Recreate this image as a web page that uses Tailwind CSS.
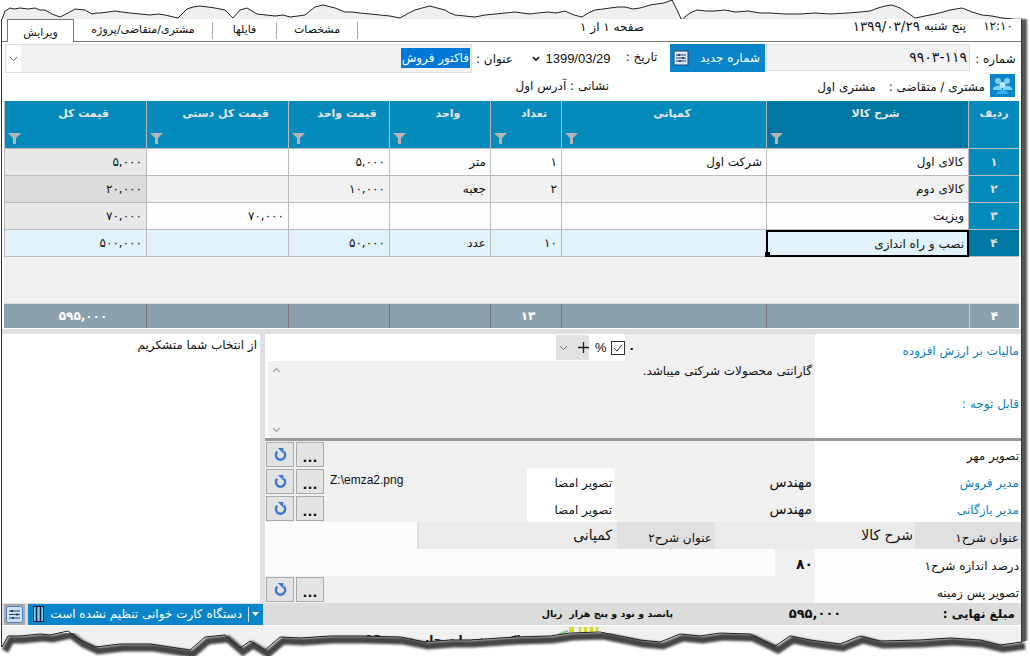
<!DOCTYPE html>
<html lang="fa">
<head>
  <meta charset="UTF-8" />
  <title>فاکتور فروش</title>
  <script src="https://cdn.jsdelivr.net/npm/@tailwindcss/browser@4"></script>
</head>
<body class="bg-white">
<div class="relative w-[1030px] h-[662px] overflow-hidden bg-white font-['DejaVu_Sans',sans-serif] text-[12px] text-[#111]">

  <!-- Window -->
  <div class="ml-[1px] mt-[19px] w-[1021px] h-[643px] border-x border-[#333] bg-white shadow-[5px_0_2px_#555] flex flex-col">

    <!-- Tabs -->
    <div class="h-[23px] flex items-end border-b border-[#777] shrink-0 text-[11px]">
      <div class="w-[5px]"></div>
      <div class="w-[67px] h-[23px] -mb-px bg-white border border-b-0 border-[#777] flex items-center justify-center pt-1" dir="rtl">ویرایش</div>
      <div class="w-[139px] h-[17px] mb-[2px] border-r border-[#aaa] flex items-center justify-center" dir="rtl">مشتری/متقاضی/پروژه</div>
      <div class="w-[64px] h-[17px] mb-[2px] border-r border-[#aaa] flex items-center justify-center" dir="rtl">فایلها</div>
      <div class="w-[81px] h-[17px] mb-[2px] border-r border-[#aaa] flex items-center justify-center" dir="rtl">مشخصات</div>
      <div class="w-[224px]"></div>
      <div class="w-[62px] h-[18px] mb-[5px] whitespace-nowrap text-center text-[12px]" dir="rtl">صفحه ۱ از ۱</div>
      <div class="flex-1 h-[18px] mb-[6px] pr-[8px] flex justify-end items-center gap-[17px] whitespace-nowrap text-[12px]" dir="ltr">
        <span dir="rtl" class="flex items-center gap-[4px]"><span>پنج شنبه</span><span dir="ltr" class="text-[13.500px] tracking-[0.2px]">۱۳۹۹/۰۳/۲۹</span></span>
        <span dir="ltr">۱۲:۱۰</span>
      </div>
    </div>

    <!-- Number / date / title -->
    <div class="h-[29px] mt-[2px] flex items-stretch shrink-0">
      <div class="ml-[3px] w-[467px] border border-[#ddd] flex bg-[#f2f2f2]">
        <div class="w-[15px] bg-white flex items-center justify-center">
          <svg width="9" height="6" viewBox="0 0 9 6"><path d="M1 1l3.500 3.500L8 1" fill="none" stroke="#666"/></svg>
        </div>
        <div class="flex-1 flex items-center justify-end pr-[1px]" dir="ltr">
          <span dir="rtl" class="bg-[#0078d7] text-white h-[20px] px-[1px] flex items-center mb-[2px]">فاکتور فروش</span>
        </div>
      </div>
      <div class="w-[41px] flex items-center justify-end whitespace-nowrap" dir="ltr"><span dir="rtl">عنوان :</span></div>
      <div class="w-[27px] flex items-center justify-end">
        <svg width="8" height="6" viewBox="0 0 8 6"><path d="M1 1l3 3 3-3" fill="none" stroke="#111" stroke-width="1.600"/></svg>
      </div>
      <div class="ml-[3px] w-[70px] flex items-center justify-center text-[13px] font-['Liberation_Sans',sans-serif]">1399/03/29</div>
      <div class="w-[57px] flex items-center justify-center whitespace-nowrap pb-[3px]" dir="rtl">تاریخ :</div>
      <div class="w-[95px] h-[28px] bg-[#0a85c9] flex items-center text-white pl-[3px]">
        <svg width="16" height="16" viewBox="0 0 16 16" class="shrink-0"><rect x="1" y="1" width="14" height="14" fill="#dce9f5" stroke="#23406e"/><path d="M3 5h10M3 8h10M3 11h10" stroke="#23406e" stroke-width="1.200"/><rect x="5" y="4" width="2" height="2" fill="#23406e"/><rect x="9" y="7" width="2" height="2" fill="#23406e"/><rect x="6" y="10" width="2" height="2" fill="#23406e"/></svg>
        <span class="flex-1 text-center pl-[6px] whitespace-nowrap" dir="rtl">شماره جدید</span>
      </div>
      <div class="w-[204px] ml-[1px] h-[27px] bg-[#f3f3f3] border border-[#ddd] flex items-center justify-end pr-[2px] text-[14px]" dir="ltr">۹۹۰۳-۱۱۹</div>
      <div class="flex-1 flex items-center justify-center whitespace-nowrap" dir="rtl">شماره :</div>
    </div>

    <!-- Customer / address -->
    <div class="h-[23px] mt-[1px] flex items-stretch shrink-0" dir="rtl">
      <div class="w-[6px]"></div>
      <div class="w-[25px] bg-[#0a85c9] flex items-center justify-center">
        <svg width="21" height="18" viewBox="0 0 21 18"><g fill="#7fd0f5"><circle cx="6" cy="4" r="3"/><circle cx="15" cy="4" r="3"/><path d="M1 11q5-5 9 0v2H1zM11 11q5-5 9 0v2h-9z"/></g><circle cx="10.500" cy="8" r="3" fill="#bdeaff"/><path d="M4 17q6.500-8 13 0z" fill="#3cb0e8"/></svg>
      </div>
      <div class="w-[173px] pr-[5px] pt-[4px] whitespace-nowrap flex gap-[13px]"><span>مشتری / متقاضی :</span><span>مشتری اول</span></div>
      <div class="w-[208px]"></div>
      <div class="whitespace-nowrap pt-[3px]">نشانی : آدرس اول</div>
    </div>

    <!-- Grid -->
    <div class="mt-[4px] ml-[2px] w-[1015px] shrink-0 grid grid-cols-[50px_203px_205px_71px_101px_101px_142px_142px] grid-rows-[48px_27px_27px_27px_27px_47px_24px] text-right" dir="rtl">
      <!-- header -->
      <div class="bg-[#058bbb] text-[#e6e6e6] border-b border-[#bbb] font-bold text-[11px] flex justify-center pt-[5px]">ردیف</div>
      <div class="bg-[#0177a3] text-[#e6e6e6] border-b border-l border-r border-[#bbb] font-bold text-[11px] flex justify-center pt-[5px] pl-[16px] relative">شرح کالا
        <svg class="absolute left-[3px] bottom-[4px]" width="13" height="11" viewBox="0 0 13 11"><path d="M0 0h13L8 5v6H5V5z" fill="#b5b5b5"/></svg></div>
      <div class="bg-[#058bbb] text-[#e6e6e6] border-b border-l border-[#bbb] font-bold text-[11px] flex justify-center pt-[5px] pl-[16px] relative">کمپانی
        <svg class="absolute left-[3px] bottom-[4px]" width="13" height="11" viewBox="0 0 13 11"><path d="M0 0h13L8 5v6H5V5z" fill="#b5b5b5"/></svg></div>
      <div class="bg-[#058bbb] text-[#e6e6e6] border-b border-l border-[#bbb] font-bold text-[11px] flex justify-center pt-[5px] pl-[16px] relative">تعداد
        <svg class="absolute left-[3px] bottom-[4px]" width="13" height="11" viewBox="0 0 13 11"><path d="M0 0h13L8 5v6H5V5z" fill="#b5b5b5"/></svg></div>
      <div class="bg-[#058bbb] text-[#e6e6e6] border-b border-l border-[#bbb] font-bold text-[11px] flex justify-center pt-[5px] pl-[16px] relative">واحد
        <svg class="absolute left-[3px] bottom-[4px]" width="13" height="11" viewBox="0 0 13 11"><path d="M0 0h13L8 5v6H5V5z" fill="#b5b5b5"/></svg></div>
      <div class="bg-[#058bbb] text-[#e6e6e6] border-b border-l border-[#bbb] font-bold text-[11px] flex justify-center pt-[5px] pl-[16px] relative">قیمت واحد
        <svg class="absolute left-[3px] bottom-[4px]" width="13" height="11" viewBox="0 0 13 11"><path d="M0 0h13L8 5v6H5V5z" fill="#b5b5b5"/></svg></div>
      <div class="bg-[#058bbb] text-[#e6e6e6] border-b border-l border-[#bbb] font-bold text-[11px] flex justify-center pt-[5px] pl-[16px] relative">قیمت کل دستی
        <svg class="absolute left-[3px] bottom-[4px]" width="13" height="11" viewBox="0 0 13 11"><path d="M0 0h13L8 5v6H5V5z" fill="#b5b5b5"/></svg></div>
      <div class="bg-[#058bbb] text-[#e6e6e6] border-b border-l border-[#bbb] font-bold text-[11px] flex justify-center pt-[5px] pl-[16px] relative">قیمت کل
        <svg class="absolute left-[3px] bottom-[4px]" width="13" height="11" viewBox="0 0 13 11"><path d="M0 0h13L8 5v6H5V5z" fill="#b5b5b5"/></svg></div>

      <!-- row 1 -->
      <div class="bg-[#058bbb] text-[#ddd] border-b border-[#bbb] flex items-center justify-center font-bold">۱</div>
      <div class="bg-[#fdfdfd] border-b border-x border-[#bbb] flex items-center px-[4px]">کالای اول</div>
      <div class="bg-[#fdfdfd] border-b border-l border-[#bbb] flex items-center px-[4px]">شرکت اول</div>
      <div class="bg-[#fdfdfd] border-b border-l border-[#bbb] flex items-center px-[4px]">۱</div>
      <div class="bg-[#fdfdfd] border-b border-l border-[#bbb] flex items-center px-[4px]">متر</div>
      <div class="bg-[#fdfdfd] border-b border-l border-[#bbb] flex items-center px-[4px]"><span dir="ltr">۵,۰۰۰</span></div>
      <div class="bg-[#fdfdfd] border-b border-l border-[#bbb]"></div>
      <div class="bg-[#e8e8e8] border-b border-l border-[#bbb] flex items-center px-[4px]"><span dir="ltr">۵,۰۰۰</span></div>

      <!-- row 2 -->
      <div class="bg-[#058bbb] text-[#ddd] border-b border-[#bbb] flex items-center justify-center font-bold">۲</div>
      <div class="bg-[#f0f0f0] border-b border-x border-[#bbb] flex items-center px-[4px]">کالای دوم</div>
      <div class="bg-[#f0f0f0] border-b border-l border-[#bbb]"></div>
      <div class="bg-[#f0f0f0] border-b border-l border-[#bbb] flex items-center px-[4px]">۲</div>
      <div class="bg-[#f0f0f0] border-b border-l border-[#bbb] flex items-center px-[4px]">جعبه</div>
      <div class="bg-[#f0f0f0] border-b border-l border-[#bbb] flex items-center px-[4px]"><span dir="ltr">۱۰,۰۰۰</span></div>
      <div class="bg-[#f0f0f0] border-b border-l border-[#bbb]"></div>
      <div class="bg-[#dcdcdc] border-b border-l border-[#bbb] flex items-center px-[4px]"><span dir="ltr">۲۰,۰۰۰</span></div>

      <!-- row 3 -->
      <div class="bg-[#058bbb] text-[#ddd] border-b border-[#bbb] flex items-center justify-center font-bold">۳</div>
      <div class="bg-[#fdfdfd] border-b border-x border-[#bbb] flex items-center px-[4px]">ویزیت</div>
      <div class="bg-[#fdfdfd] border-b border-l border-[#bbb]"></div>
      <div class="bg-[#fdfdfd] border-b border-l border-[#bbb]"></div>
      <div class="bg-[#fdfdfd] border-b border-l border-[#bbb]"></div>
      <div class="bg-[#fdfdfd] border-b border-l border-[#bbb]"></div>
      <div class="bg-[#fdfdfd] border-b border-l border-[#bbb] flex items-center px-[4px]"><span dir="ltr">۷۰,۰۰۰</span></div>
      <div class="bg-[#e8e8e8] border-b border-l border-[#bbb] flex items-center px-[4px]"><span dir="ltr">۷۰,۰۰۰</span></div>

      <!-- row 4 -->
      <div class="bg-[#0177a3] text-[#ddd] border-b border-[#bbb] flex items-center justify-center font-bold">۴</div>
      <div class="relative bg-[#e1f2fa] border-2 border-black flex items-center px-[3px]">نصب و راه اندازی
        <span class="absolute -left-[3px] -bottom-[2px] w-[5px] h-[5px] bg-black"></span></div>
      <div class="bg-[#e1f2fa] border-b border-l border-[#bbb]"></div>
      <div class="bg-[#e1f2fa] border-b border-l border-[#bbb] flex items-center px-[4px]">۱۰</div>
      <div class="bg-[#e1f2fa] border-b border-l border-[#bbb] flex items-center px-[4px]">عدد</div>
      <div class="bg-[#e1f2fa] border-b border-l border-[#bbb] flex items-center px-[4px]"><span dir="ltr">۵۰,۰۰۰</span></div>
      <div class="bg-[#e1f2fa] border-b border-l border-[#bbb]"></div>
      <div class="bg-[#e1f2fa] border-b border-l border-[#bbb] flex items-center px-[4px]"><span dir="ltr">۵۰۰,۰۰۰</span></div>

      <!-- empty -->
      <div class="col-span-8 bg-[#f0f0f0] border-b border-[#ddd]"></div>

      <!-- footer -->
      <div class="bg-[#8ba1ad] text-white border-l border-[#ccc] flex items-center justify-center font-bold">۴</div>
      <div class="bg-[#8ba1ad] border-l border-[#777]"></div>
      <div class="bg-[#8ba1ad] border-l border-[#777]"></div>
      <div class="bg-[#8ba1ad] text-white border-l border-[#777] flex items-center justify-center font-bold pl-[4px]">۱۳</div>
      <div class="bg-[#8ba1ad] border-l border-[#777]"></div>
      <div class="bg-[#8ba1ad] border-l border-[#777]"></div>
      <div class="bg-[#8ba1ad] border-l border-[#777]"></div>
      <div class="bg-[#8ba1ad] text-white flex items-center justify-center font-bold pl-[16px]"><span dir="ltr">۵۹۵,۰۰۰</span></div>
    </div>

    <!-- Bottom panels -->
    <div class="mt-[1px] flex-1 bg-[#e0e0e0] pt-[5px] flex flex-col min-h-0">
      <div class="h-[269px] flex shrink-0">
        <div class="w-[258px] bg-white text-right pr-[3px] pt-[2px]" dir="rtl">از انتخاب شما متشکریم</div>
        <div class="w-[5px]"></div>

        <div class="w-[756px] flex flex-col bg-[#f0f0f0]" dir="rtl">
          <!-- VAT -->
          <div class="h-[27px] flex shrink-0 bg-white">
            <div class="w-[206px] pr-[2px] pt-[8px] text-[#0a7fc0]">مالیات بر ارزش افزوده</div>
            <div class="w-[190px] bg-[#f0f0f0] flex items-center pl-[3px] justify-end"><span class="font-bold">۰</span></div>
            <div class="w-[36px] flex items-center gap-[4px] pl-[6px] whitespace-nowrap" dir="ltr">
              <span class="text-[13px] font-['Liberation_Sans',sans-serif]">%</span>
              <svg width="14" height="14" viewBox="0 0 14 14" class="shrink-0"><rect x=".5" y=".5" width="13" height="13" fill="#fff" stroke="#333"/><path d="M3 7l3 3 5-6" fill="none" stroke="#333"/></svg>
            </div>
            <div class="w-[33px] h-[25px] mt-px bg-[#e2e2e2] flex items-center justify-between pl-[3px]" dir="ltr">
              <svg width="9" height="6" viewBox="0 0 9 6"><path d="M1 1l3.500 3.500L8 1" fill="none" stroke="#777"/></svg>
              <svg width="11" height="11" viewBox="0 0 11 11"><path d="M5.500 0v11M0 5.500h11" stroke="#222" stroke-width="1.300"/></svg>
            </div>
          </div>
          <!-- Notes -->
          <div class="h-[77px] flex shrink-0 bg-white">
            <div class="w-[206px] pr-[2px] pt-[34px] text-[#0a7fc0]">قابل توجه :</div>
            <div class="w-[547px] bg-[#f0f0f0] pr-[3px] pt-[1px] relative">گارانتی محصولات شرکتی میباشد.
              <svg class="absolute left-[4px] top-[6px]" width="9" height="6" viewBox="0 0 9 6"><path d="M1 5l3.500-3.500L8 5" fill="none" stroke="#aaa" stroke-width="1.300"/></svg>
              <svg class="absolute left-[4px] bottom-[5px]" width="9" height="6" viewBox="0 0 9 6"><path d="M1 1l3.500 3.500L8 1" fill="none" stroke="#aaa" stroke-width="1.300"/></svg>
            </div>
          </div>
          <div class="h-[3px] bg-[#999] shrink-0"></div>

          <!-- Stamp -->
          <div class="h-[27px] flex shrink-0">
            <div class="w-[206px] bg-white pr-[2px] pt-[6px]">تصویر مهر</div>
            <div class="w-[488px]"></div>
            <div class="w-[62px] flex gap-[2px] pl-[1px] pt-px" dir="ltr">
              <button class="w-[28px] h-[25px] bg-[#e3e3e3] border border-[#aaa] flex items-center justify-center"><svg width="13" height="13" viewBox="0 0 14 14"><path d="M3.500 4a5 5 0 1 0 7 0" fill="none" stroke="#3f78d8" stroke-width="2.600"/><path d="M4 0h6v6z" fill="#3f78d8"/></svg></button>
              <button class="w-[28px] h-[25px] bg-[#e3e3e3] border border-[#aaa] font-bold leading-none pt-[5px] text-[13px]">...</button>
            </div>
          </div>
          <!-- Sales manager -->
          <div class="h-[27px] flex shrink-0">
            <div class="w-[206px] bg-white pr-[2px] pt-[6px] text-[#0a7fc0]">مدیر فروش</div>
            <div class="w-[200px] pr-[3px] pt-[4px] text-[14px]">مهندس</div>
            <div class="w-[88px] bg-white pr-[3px] pt-[6px]">تصویر امضا</div>
            <div class="w-[200px] pl-[3px] pt-[3px] text-[12px] font-['Liberation_Sans',sans-serif] text-left" dir="ltr">Z:\emza2.png</div>
            <div class="w-[62px] flex gap-[2px] pl-[1px] pt-px" dir="ltr">
              <button class="w-[28px] h-[25px] bg-[#e3e3e3] border border-[#aaa] flex items-center justify-center"><svg width="13" height="13" viewBox="0 0 14 14"><path d="M3.500 4a5 5 0 1 0 7 0" fill="none" stroke="#3f78d8" stroke-width="2.600"/><path d="M4 0h6v6z" fill="#3f78d8"/></svg></button>
              <button class="w-[28px] h-[25px] bg-[#e3e3e3] border border-[#aaa] font-bold leading-none pt-[5px] text-[13px]">...</button>
            </div>
          </div>
          <!-- Commerce manager -->
          <div class="h-[27px] flex shrink-0">
            <div class="w-[206px] bg-white pr-[2px] pt-[6px] text-[#0a7fc0]">مدیر بازگانی</div>
            <div class="w-[200px] pr-[3px] pt-[4px] text-[14px]">مهندس</div>
            <div class="w-[88px] bg-white pr-[3px] pt-[6px]">تصویر امضا</div>
            <div class="w-[200px]"></div>
            <div class="w-[62px] flex gap-[2px] pl-[1px] pt-px" dir="ltr">
              <button class="w-[28px] h-[25px] bg-[#e3e3e3] border border-[#aaa] flex items-center justify-center"><svg width="13" height="13" viewBox="0 0 14 14"><path d="M3.500 4a5 5 0 1 0 7 0" fill="none" stroke="#3f78d8" stroke-width="2.600"/><path d="M4 0h6v6z" fill="#3f78d8"/></svg></button>
              <button class="w-[28px] h-[25px] bg-[#e3e3e3] border border-[#aaa] font-bold leading-none pt-[5px] text-[13px]">...</button>
            </div>
          </div>
          <!-- Description titles -->
          <div class="h-[27px] flex shrink-0">
            <div class="w-[106px] bg-[#e0e0e0] pr-[2px] pt-[7px]">عنوان شرح۱</div>
            <div class="w-[200px] bg-[#ebebeb] pr-[2px] pt-[3px] text-[14px]">شرح کالا</div>
            <div class="w-[98px] bg-[#e0e0e0] pr-[3px] pt-[7px]">عنوان شرح۲</div>
            <div class="w-[200px] bg-[#ebebeb] pr-[5px] pt-[3px] text-[14px] border-l-2 border-[#ddd]">کمپانی</div>
            <div class="flex-1 bg-[#fcfcfc]"></div>
          </div>
          <!-- Size -->
          <div class="h-[27px] flex shrink-0">
            <div class="w-[206px] bg-[#fdfdfd] pr-[2px] pt-[8px]">درصد اندازه شرح۱</div>
            <div class="w-[40px] bg-[#f0f0f0] pr-[2px] pt-[5px] font-bold text-[14px]">۸۰</div>
            <div class="flex-1 bg-[#fcfcfc]"></div>
          </div>
          <!-- Background -->
          <div class="h-[27px] flex shrink-0">
            <div class="w-[206px] bg-[#fdfdfd] pr-[2px] pt-[8px]">تصویر پس زمینه</div>
            <div class="w-[488px]"></div>
            <div class="w-[62px] flex gap-[2px] pl-[1px] pt-px" dir="ltr">
              <button class="w-[28px] h-[25px] bg-[#e3e3e3] border border-[#aaa] flex items-center justify-center"><svg width="13" height="13" viewBox="0 0 14 14"><path d="M3.500 4a5 5 0 1 0 7 0" fill="none" stroke="#3f78d8" stroke-width="2.600"/><path d="M4 0h6v6z" fill="#3f78d8"/></svg></button>
              <button class="w-[28px] h-[25px] bg-[#e3e3e3] border border-[#aaa] font-bold leading-none pt-[5px] text-[13px]">...</button>
            </div>
          </div>
        </div>
      </div>

      <!-- Total bar -->
      <div class="h-[23px] bg-[#dcdcdc] border-b border-white flex items-center shrink-0">
        <div class="w-[21px] h-[21px] ml-[2px] bg-[#aaa] flex items-center justify-center">
          <svg width="17" height="17" viewBox="0 0 17 17"><rect x=".5" y=".5" width="16" height="16" rx="2" fill="#cfe0f5" stroke="#4f7fd0"/><path d="M3 5h11M3 8.500h11M3 12h11" stroke="#23406e" stroke-width="1.200"/><rect x="5" y="4" width="2" height="2" fill="#23406e"/><rect x="10" y="7.500" width="2" height="2" fill="#23406e"/><rect x="6" y="11" width="2" height="2" fill="#23406e"/></svg>
        </div>
        <div class="ml-[3px] w-[235px] h-[21px] bg-[#0a85c9] text-white flex items-center pl-[5px] whitespace-nowrap">
          <svg width="11" height="16" viewBox="0 0 11 16" class="shrink-0"><rect x=".5" y=".5" width="10" height="15" fill="#6fd5ee" stroke="#301040"/><path d="M3.500 0v16M7.500 0v16" stroke="#301040" stroke-width="1.500"/></svg>
          <span class="flex-1 text-right pr-[6px]" dir="rtl">دستگاه کارت خوانی تنظیم نشده است</span>
          <span class="w-px h-[15px] bg-[#cfe7f5] mr-[3px]"></span>
          <svg width="7" height="4" viewBox="0 0 7 4" class="mr-[4px] shrink-0"><path d="M0 0h7L3.500 4z" fill="#fff"/></svg>
        </div>
        <div class="w-[282px]"></div>
        <div class="w-[128px] text-center text-[9.500px] font-bold whitespace-nowrap" dir="rtl">پانصد و نود و پنج هزار&nbsp; ریال</div>
        <div class="w-[115px]"></div>
        <div class="w-[54px] text-[13px] font-bold text-center whitespace-nowrap" dir="ltr">۵۹۵,۰۰۰</div>
        <div class="flex-1 pr-[6px] text-right font-bold whitespace-nowrap" dir="rtl">مبلغ نهایی :</div>
      </div>

      <!-- Content showing above the tear -->
      <div class="flex-1 bg-[#f0f0f0] relative">
        <div class="absolute left-[363px] top-[5px] font-bold whitespace-nowrap" dir="rtl">فاکتور خدمات چاپ نمره 13</div>
        <svg class="absolute left-[550px] top-[1px]" width="50" height="14" viewBox="0 0 50 14"><path d="M0 12q8-6 16-8" fill="none" stroke="#7ec98a" stroke-width="2"/><rect x="17" y="0" width="5" height="5" fill="#d8d82a"/><path d="M28 0v9q3 4 5 0V0M34 0v9q3 4 5 0V0M40 0v9q3 4 5 0V0" fill="none" stroke="#d8d82a" stroke-width="2.500"/></svg>
      </div>
    </div>
  </div>

  <!-- Torn top edge of the screenshot -->
  <svg class="absolute left-0 top-0" width="1030" height="19" viewBox="0 0 1030 19">
    <polygon fill="#efefef" stroke="#222" stroke-width="1" points="1,22 5,11 10,8 14,9 20,8 28,9 35,8 40,10 45,10 52,14 60,17 64,15 68,13 75,9 85,10 92,14 96,13 100,13 108,12 115,11 122,12 130,13 140,14 150,15 158,14 165,15 178,18 183,13 187,9 193,7 200,6 208,7 215,8 225,10 229,14 233,18 240,10 247,8 252,11 257,14 266,15 275,16 283,15 290,17 298,16 305,15 311,10 315,7 323,5 335,8 340,10 345,12 352,12 360,13 370,14 380,15 390,16 400,18 407,14 415,10 422,8 430,6 437,8 445,10 450,13 455,15 465,16 475,17 485,15 495,14 505,13 515,12 522,13 530,14 538,13 548,12 556,13 565,11 574,15 582,17 588,13 595,10 603,9 610,8 618,7 625,7 633,9 640,8 650,5 657,4 664,3 672,0 675,6 678,12 682,21 686,16 690,13 697,10 706,11 715,11 725,10 735,12 748,11 760,13 770,13 785,14 800,14 815,13 830,14 848,13 860,12 870,11 878,8 885,6 892,5 900,8 908,13 915,18 925,16 935,14 943,12 950,10 962,8 967,10 972,12 982,15 992,16 1002,18 1012,19 1022,22 1022,30 1,30"/>
  </svg>

  <!-- Torn bottom edge of the screenshot -->
  <svg class="absolute left-0 bottom-0" width="1030" height="42" viewBox="0 620 1030 42">
    <defs><filter id="tear"><feGaussianBlur stdDeviation="1.200"/></filter></defs>
    <polygon fill="#fff" points="0,647 2,647 8,636 20,636 40,634 50,635 68,631 80,640 95,647 120,644 150,644 170,647 190,650 205,637 225,635 240,648 250,641 265,650 280,637 300,638 330,636 360,636 400,637 425,642 450,640 470,640 515,637 550,636 570,633 600,632 640,640 660,642 680,634 700,636 720,633 750,634 775,646 790,636 810,640 840,644 860,636 880,641 920,640 950,638 980,640 1000,645 1022,642 1030,640 1030,662 0,662"/>
    <polyline filter="url(#tear)" fill="none" stroke="#444" stroke-width="7" transform="translate(3 4)" points="2,647 8,636 20,636 40,634 50,635 68,631 80,640 95,647 120,644 150,644 170,647 190,650 205,637 225,635 240,648 250,641 265,650 280,637 300,638 330,636 360,636 400,637 425,642 450,640 470,640 515,637 550,636 570,633 600,632 640,640 660,642 680,634 700,636 720,633 750,634 775,646 790,636 810,640 840,644 860,636 880,641 920,640 950,638 980,640 1000,645 1022,642"/>
    <polyline fill="none" stroke="#222" stroke-width="1" points="2,647 8,636 20,636 40,634 50,635 68,631 80,640 95,647 120,644 150,644 170,647 190,650 205,637 225,635 240,648 250,641 265,650 280,637 300,638 330,636 360,636 400,637 425,642 450,640 470,640 515,637 550,636 570,633 600,632 640,640 660,642 680,634 700,636 720,633 750,634 775,646 790,636 810,640 840,644 860,636 880,641 920,640 950,638 980,640 1000,645 1022,642"/>
  </svg>
</div>
</body>
</html>
